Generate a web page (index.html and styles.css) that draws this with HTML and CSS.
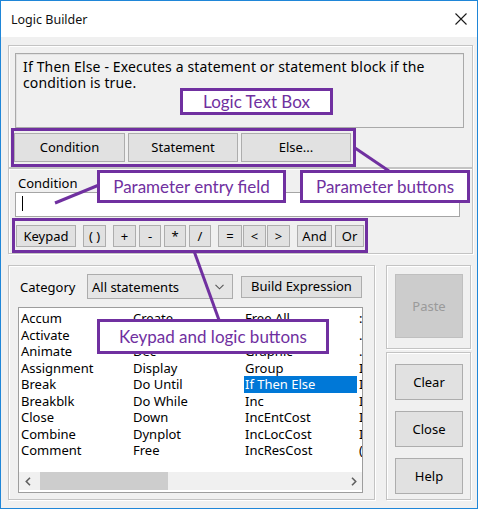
FILE: index.html
```html
<!DOCTYPE html>
<html>
<head>
<meta charset="utf-8">
<title>Logic Builder</title>
<link rel="stylesheet" href="styles.css">
</head>
<body>
<div class="window">
  <div class="titlebar">
    <span class="title">Logic Builder</span>
    <svg class="close" width="12" height="12" viewBox="0 0 12 12"><path d="M0.5 0.5 L11.5 11.5 M11.5 0.5 L0.5 11.5" stroke="#1a1a1a" stroke-width="1.1" fill="none"/></svg>
  </div>
  <div class="client">
    <div class="group g1">
      <div class="desc">If Then Else - Executes a statement or statement block if the condition is true.</div>
      <div class="param-row">
        <button class="btn pbtn first">Condition</button>
        <button class="btn pbtn">Statement</button>
        <button class="btn pbtn">Else...</button>
      </div>
    </div>
    <div class="group g2">
      <div class="cond-label">Condition</div>
      <div class="entry"><span class="caret"></span></div>
      <div class="keypad">
        <div class="kgroup"><button class="btn key k-keypad">Keypad</button></div>
        <div class="kgroup"><button class="btn key k-paren">( )</button></div>
        <div class="kgroup arith">
          <button class="btn key k-plus">+</button>
          <button class="btn key">-</button>
          <button class="btn key">*</button>
          <button class="btn key">/</button>
        </div>
        <div class="kgroup compare">
          <button class="btn key k-eq">=</button>
          <button class="btn key k-cmp">&lt;</button>
          <button class="btn key k-cmp">&gt;</button>
        </div>
        <div class="kgroup logic">
          <button class="btn key k-and">And</button>
          <button class="btn key k-or">Or</button>
        </div>
      </div>
    </div>
    <div class="lower">
      <div class="group g3">
        <div class="cat-row">
          <span class="cat-label">Category</span>
          <div class="combo"><span>All statements</span><svg width="9" height="6" viewBox="0 0 9 6"><path d="M0.5 0.8 L4.5 4.8 L8.5 0.8" stroke="#555" stroke-width="1.1" fill="none"/></svg></div>
          <button class="btn build">Build Expression</button>
        </div>
        <div class="listbox">
          <div class="cols">
            <div class="col">
              <div class="item">Accum</div>
              <div class="item">Activate</div>
              <div class="item">Animate</div>
              <div class="item">Assignment</div>
              <div class="item">Break</div>
              <div class="item">Breakblk</div>
              <div class="item">Close</div>
              <div class="item">Combine</div>
              <div class="item">Comment</div>
            </div>
            <div class="col">
              <div class="item">Create</div>
              <div class="item">Debug</div>
              <div class="item">Dec</div>
              <div class="item">Display</div>
              <div class="item">Do Until</div>
              <div class="item">Do While</div>
              <div class="item">Down</div>
              <div class="item">Dynplot</div>
              <div class="item">Free</div>
            </div>
            <div class="col wide">
              <div class="item">Free All</div>
              <div class="item">Get</div>
              <div class="item">Graphic</div>
              <div class="item">Group</div>
              <div class="item sel">If Then Else</div>
              <div class="item">Inc</div>
              <div class="item">IncEntCost</div>
              <div class="item">IncLocCost</div>
              <div class="item">IncResCost</div>
            </div>
            <div class="col">
              <div class="item">:nc</div>
              <div class="item">.nsert</div>
              <div class="item">.nt</div>
              <div class="item">Integer</div>
              <div class="item">Interrupt</div>
              <div class="item">Int</div>
              <div class="item">Inventory</div>
              <div class="item">Invert</div>
              <div class="item">(Order)</div>
            </div>
          </div>
          <div class="hscroll">
            <span class="arrow"><svg width="6" height="9" viewBox="0 0 6 9"><path d="M5 0.8 L1.3 4.5 L5 8.2" stroke="#606060" stroke-width="1.6" fill="none"/></svg></span>
            <span class="thumb"></span>
            <span class="track"></span>
            <span class="arrow"><svg width="6" height="9" viewBox="0 0 6 9"><path d="M1 0.8 L4.7 4.5 L1 8.2" stroke="#606060" stroke-width="1.6" fill="none"/></svg></span>
          </div>
        </div>
      </div>
      <div class="side">
        <div class="group g4"><button class="btn paste">Paste</button></div>
        <div class="group g5">
          <button class="btn side-btn">Clear</button>
          <button class="btn side-btn">Close</button>
          <button class="btn side-btn">Help</button>
        </div>
      </div>
    </div>
  </div>
</div>

<svg class="leaders" width="480" height="510" viewBox="0 0 480 510">
  <line x1="355" y1="148" x2="389" y2="171" stroke="#7030a0" stroke-width="3"/>
  <line x1="55" y1="203" x2="99" y2="185" stroke="#7030a0" stroke-width="3"/>
  <line x1="194" y1="251" x2="219" y2="320" stroke="#7030a0" stroke-width="3"/>
</svg>
<div class="frame f-params"></div>
<div class="frame f-keypad"></div>
<div class="callout c-logic">Logic Text Box</div>
<div class="callout c-entry">Parameter entry field</div>
<div class="callout c-params">Parameter buttons</div>
<div class="callout c-keypad">Keypad and logic buttons</div>
</body>
</html>
```

FILE: styles.css
```css
* { box-sizing: border-box; }
html, body { margin: 0; padding: 0; background: #fff; }
body {
  width: 480px; height: 510px; overflow: hidden;
  font-family: "Noto Sans", "Open Sans", sans-serif;
  font-size: 13px; color: #000;
}
.window {
  width: 478px; height: 509px;
  border: 1px solid #1f86d8;
  background: #f0f0f0;
  display: flex; flex-direction: column;
}
.titlebar {
  flex: none; height: 36px; background: #fff;
  display: flex; align-items: center; justify-content: space-between;
  padding: 0 10px 0 10px;
}
.title { font-size: 12.5px; color: #111; }
.close { display: block; }
.client { padding: 8px 4px 0 7px; }

.group {
  border: 1px solid #c3c3c3;
  box-shadow: inset 1px 1px 0 #fff, 1px 1px 0 #fff;
}
.btn {
  font: inherit; color: #000; margin: 0; padding: 0;
  background: #e1e1e1; border: 1px solid #adadad;
  display: flex; align-items: center; justify-content: center;
  line-height: 1;
}

.g1 { width: 465px; height: 123px; padding: 7px 0 0 6px; }
.desc {
  width: 449px; height: 75px;
  border: 1px solid #a9a9a9;
  box-shadow: inset 1px 1px 0 #e2e2e2;
  padding: 5px 7px; line-height: 16px;
  font-size: 14px; letter-spacing: 0.15px;
}
.param-row { display: flex; gap: 3px; margin: 5px 0 0 -1px; }
.pbtn { width: 110px; height: 29px; }
.pbtn.first { width: 111px; }

.g2 { width: 465px; height: 86px; padding: 6px 0 0 6px; }
.cond-label { line-height: 16px; padding-left: 3px; }
.entry {
  position: relative;
  width: 445px; height: 25px; margin-top: 1px;
  background: #fff; border: 1px solid #a5a5a5;
}
.caret { position: absolute; left: 6px; top: 3px; width: 1px; height: 15px; background: #000; }
.keypad { display: flex; gap: 7px; margin: 8px 0 0 1px; }
.kgroup { display: flex; gap: 3px; }
.kgroup.compare { gap: 1px; }
.key { width: 22px; height: 22px; }
.k-keypad { width: 60px; }
.k-paren, .k-plus, .k-cmp { width: 23px; }
.k-eq { width: 24px; }
.k-and { width: 35px; }
.k-or { width: 29px; }

.lower { display: flex; gap: 11px; margin-top: 11px; }
.g3 { width: 367px; height: 235px; padding: 8px 0 0 9px; }
.cat-row { display: flex; align-items: center; height: 25px; }
.cat-label { width: 69px; padding-left: 2px; }
.combo {
  width: 146px; height: 25px;
  background: #e5e5e5; border: 1px solid #acacac;
  display: flex; align-items: center; justify-content: space-between;
  padding: 0 8px 0 4px;
}
.build { width: 121px; height: 22px; margin-left: 8px; }
.listbox {
  width: 345px; height: 186px; margin-top: 8px;
  background: #fff; border: 1px solid #9d9d9d;
  display: flex; flex-direction: column; overflow: hidden;
}
.cols { flex: 1; display: flex; padding: 2px 0 0 1px; line-height: 16.5px; overflow: hidden; }
.col { width: 112px; flex: none; }
.col.wide { width: 114px; }
.item { height: 16.5px; padding-left: 1px; white-space: nowrap; }
.col.wide .item { padding-right: 1px; width: 113px; }
.item.sel { background: #0078d7; color: #fff; }
.hscroll { flex: none; height: 18px; margin-bottom: 2px; display: flex; align-items: stretch; background: #f0f0f0; }
.arrow { width: 17px; flex: none; display: flex; align-items: center; justify-content: center; }
.thumb { width: 128px; margin: 0 0 0 4px; background: #cdcdcd; }
.track { flex: 1; }

.side { width: 85px; display: flex; flex-direction: column; gap: 3px; }
.g4 { height: 84px; padding: 8px 0 0 8px; }
.paste { width: 68px; height: 64px; background: #cccccc; border-color: #bfbfbf; color: #9a9a9a; }
.g5 { height: 148px; padding: 11px 0 0 8px; display: flex; flex-direction: column; gap: 11px; }
.side-btn { width: 68px; height: 36px; }

.leaders { position: absolute; left: 0; top: 0; }
.frame { position: absolute; border: 3px solid #7030a0; }
.f-params { left: 11px; top: 128px; width: 345px; height: 39px; }
.f-keypad { left: 12px; top: 218px; width: 356px; height: 35px; }
.callout {
  position: absolute;
  border: 3px solid #7030a0; background: #fff; color: #7030a0;
  font-family: Lato, "Noto Sans", sans-serif; font-size: 17px;
  display: flex; align-items: center; justify-content: center;
  white-space: nowrap;
}
.c-logic { left: 180px; top: 88px; width: 153px; height: 27px; }
.c-entry { left: 97px; top: 170px; width: 189px; height: 33px; }
.c-params { left: 300px; top: 170px; width: 170px; height: 33px; }
.c-keypad { left: 97px; top: 319px; width: 232px; height: 35px; }
```
